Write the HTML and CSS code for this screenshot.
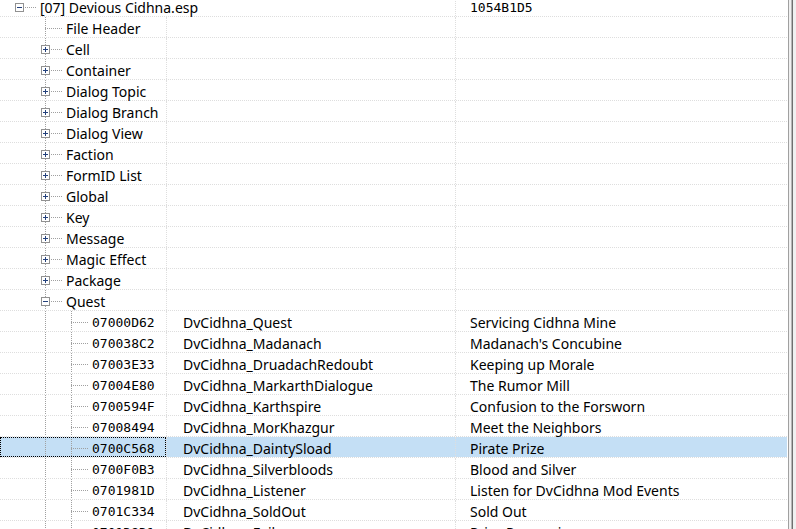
FILE: index.html
```html
<!DOCTYPE html>
<html lang="en">
<head>
    <meta charset="UTF-8">
    <meta name="viewport" content="width=device-width, initial-scale=1.0">
    <title>Devious Cidhna.esp</title>
    <link rel="stylesheet" href="styles.css">
</head>
<body>
    <div class="view">
        <div class="tree" id="tree"></div>
        <div class="edge"></div>
    </div>
    <script>
        const groups = ['Cell', 'Container', 'Dialog Topic', 'Dialog Branch', 'Dialog View', 'Faction',
            'FormID List', 'Global', 'Key', 'Message', 'Magic Effect', 'Package'];

        const quests = [
            ['07000D62', 'DvCidhna_Quest', 'Servicing Cidhna Mine'],
            ['070038C2', 'DvCidhna_Madanach', "Madanach's Concubine"],
            ['07003E33', 'DvCidhna_DruadachRedoubt', 'Keeping up Morale'],
            ['07004E80', 'DvCidhna_MarkarthDialogue', 'The Rumor Mill'],
            ['0700594F', 'DvCidhna_Karthspire', 'Confusion to the Forsworn'],
            ['07008494', 'DvCidhna_MorKhazgur', 'Meet the Neighbors'],
            ['0700C568', 'DvCidhna_DaintySload', 'Pirate Prize'],
            ['0700F0B3', 'DvCidhna_Silverbloods', 'Blood and Silver'],
            ['0701981D', 'DvCidhna_Listener', 'Listen for DvCidhna Mod Events'],
            ['0701C334', 'DvCidhna_SoldOut', 'Sold Out'],
            ['0701D8D1', 'DvCidhna_Failure', 'Prize Possession']
        ];

        const selected = '0700C568';
        const tree = document.getElementById('tree');

        // level: 0 plugin, 1 record group, 2 record
        // toggle: '' (leaf), 'plus', 'minus'
        function addRow(level, toggle, label, edid, full, opts = {}) {
            const row = document.createElement('div');
            row.className = 'row';
            if (level === 0) row.classList.add('plugin');
            if (opts.selected) row.classList.add('selected');

            const name = document.createElement('div');
            name.className = 'cell name';
            for (let i = 0; i < level; i++) {
                const lane = document.createElement('span');
                lane.className = i === 1 ? 'lane pass' : 'lane';
                name.appendChild(lane);
            }
            const joint = document.createElement('span');
            joint.className = level === 0 ? 'joint' : 'joint stem';
            if (toggle) {
                const box = document.createElement('span');
                box.className = 'toggle ' + toggle;
                joint.appendChild(box);
            }
            name.appendChild(joint);
            const text = document.createElement('span');
            text.className = opts.mono ? 'label mono' : 'label';
            text.innerText = label;
            name.appendChild(text);

            const edidCell = document.createElement('div');
            edidCell.className = 'cell edid';
            edidCell.innerText = edid;

            const fullCell = document.createElement('div');
            fullCell.className = opts.monoFull ? 'cell full mono' : 'cell full';
            fullCell.innerText = full;

            row.appendChild(name);
            row.appendChild(edidCell);
            row.appendChild(fullCell);
            tree.appendChild(row);
        }

        addRow(0, 'minus', '[07] Devious Cidhna.esp', '', '1054B1D5', { monoFull: true });
        addRow(1, '', 'File Header', '', '');
        groups.forEach(group => addRow(1, 'plus', group, '', ''));
        addRow(1, 'minus', 'Quest', '', '');
        quests.forEach(([formId, edid, full]) => {
            addRow(2, '', formId, edid, full, { mono: true, selected: formId === selected });
        });
    </script>
</body>
</html>
```

FILE: styles.css
```css
body {
    margin: 0;
    background-color: #fff;
    color: #000;
    font-family: "Noto Sans", "Open Sans", sans-serif;
    font-size: 14px;
    overflow: hidden;
}
.view {
    display: flex;
    height: 100vh;
}
.tree {
    width: 787px;
    margin-top: -4px;
}
.edge {
    width: 9px;
    box-sizing: border-box;
    background-color: #f0f0f0;
    border-left: 1px solid #fff;
    box-shadow: inset 1px 0 0 #a0a0a0, inset -3px 0 0 #f0f0f0, inset -4px 0 0 #6f6f6f, inset -5px 0 0 #b5b5b5;
}
.row {
    display: flex;
    height: 21px;
    box-sizing: border-box;
    border-bottom: 1px dotted #dedede;
}
.cell {
    line-height: 19px;
    padding-top: 2px;
    box-sizing: border-box;
    white-space: nowrap;
}
.name {
    width: 166px;
    flex: none;
    display: flex;
    padding-top: 0;
    padding-left: 6px;
}
.name .label {
    padding-top: 2px;
}
.edid {
    width: 289px;
    flex: none;
    border-left: 1px dotted #dedede;
    padding-left: 16px;
}
.full {
    flex: 1;
    border-left: 1px dotted #dedede;
    padding-left: 14px;
}
.mono {
    font-family: "DejaVu Sans Mono", monospace;
    font-size: 13px;
}
.label {
    padding-left: 4px;
}

/* the plugin row's name runs on past its column */
.row.plugin .edid {
    border-left-color: transparent;
}

/* tree guide lines */
.lane {
    width: 26px;
    flex: none;
}
.lane.pass {
    background: repeating-linear-gradient(to bottom, #a0a0a0 0 1px, transparent 1px 2px) 13px 0 / 1px 100% no-repeat;
}
.joint {
    width: 30px;
    flex: none;
    display: flex;
    align-items: flex-start;
    background: repeating-linear-gradient(to right, #a0a0a0 0 1px, transparent 1px 2px) 13px 11px / 17px 1px no-repeat;
}
.joint.stem {
    background:
        repeating-linear-gradient(to right, #a0a0a0 0 1px, transparent 1px 2px) 13px 11px / 17px 1px no-repeat,
        repeating-linear-gradient(to bottom, #a0a0a0 0 1px, transparent 1px 2px) 13px 0 / 1px 100% no-repeat;
}
.toggle {
    width: 9px;
    height: 9px;
    margin-left: 9px;
    margin-top: 7px;
    box-sizing: border-box;
    border: 1px solid #919191;
    background-color: #fff;
}
.toggle.minus {
    background: linear-gradient(#24417c, #24417c) center / 5px 1px no-repeat, #fff;
}
.toggle.plus {
    background:
        linear-gradient(#24417c, #24417c) center / 5px 1px no-repeat,
        linear-gradient(#24417c, #24417c) center / 1px 5px no-repeat,
        #fff;
}

/* selected record */
.row.selected .cell {
    background-color: #c4dff5;
}
.row.selected .name {
    outline: 1px dotted #000;
    outline-offset: -1px;
}
```
